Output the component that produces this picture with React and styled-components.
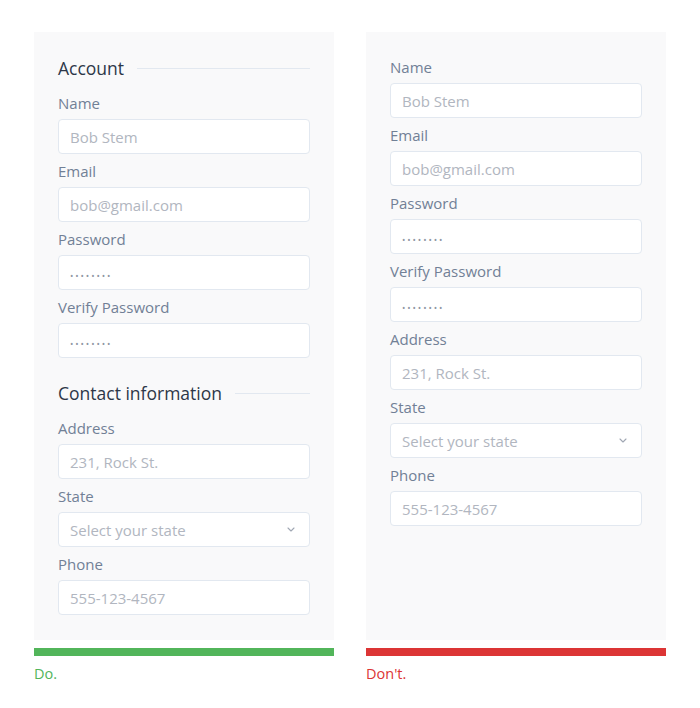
import React from 'react';
import styled, { createGlobalStyle } from 'styled-components';

const GlobalStyle = createGlobalStyle`
  * { box-sizing: border-box; }
  body {
    margin: 0;
    background: #ffffff;
    font-family: "Open Sans", "Noto Sans", sans-serif;
  }
`;

const Page = styled.div`
  display: flex;
  gap: 32px;
  padding: 32px 0 0 34px;
`;

const Column = styled.div`
  width: 300px;
  display: flex;
  flex-direction: column;
`;

const Panel = styled.div`
  height: 608px;
  background: #f9f9fa;
  padding: ${p => (p.flat ? '25px 24px 0' : '24px 24px 0')};
`;

const Section = styled.div`
  margin-top: ${p => (p.first ? '0' : '23px')};
`;

const Heading = styled.div`
  display: flex;
  align-items: center;
  gap: 13px;
  height: 24px;
  margin-bottom: 13px;
  font-size: 17.5px;
  font-weight: 500;
  color: #2d3748;
  white-space: nowrap;

  &::after {
    content: '';
    flex: 1;
    height: 1px;
    background: #e2e8f0;
  }
`;

const Field = styled.div`
  display: flex;
  flex-direction: column;
  margin-bottom: 7px;
`;

const Label = styled.label`
  font-size: 15px;
  line-height: 21px;
  font-weight: 500;
  color: #718096;
  margin-bottom: 5px;
`;

const Input = styled.input`
  width: 252px;
  height: 35px;
  border: 1px solid #e2e8f0;
  border-radius: 4px;
  background: #ffffff;
  padding: 0 11px;
  font-family: inherit;
  font-size: 15px;
  color: #2d3748;
  outline: none;

  &::placeholder {
    color: ${p => (p.dots ? '#8e95a2' : '#b1b6c0')};
    font-size: ${p => (p.dots ? '9px' : '15px')};
    letter-spacing: ${p => (p.dots ? '1.9px' : '0')};
  }
`;

const SelectBox = styled.div`
  width: 252px;
  height: 35px;
  border: 1px solid #e2e8f0;
  border-radius: 4px;
  background: #ffffff;
  padding: 0 14px 0 11px;
  display: flex;
  align-items: center;
  justify-content: space-between;
  font-size: 15px;
  color: #b1b6c0;
`;

const Bar = styled.div`
  height: 8px;
  margin-top: 8px;
  background: ${p => p.color};
`;

const Caption = styled.div`
  margin-top: 8px;
  font-size: 14.5px;
  line-height: 20px;
  font-weight: 500;
  color: ${p => p.color};
`;

const Chevron = () => (
  <svg width="8" height="5" viewBox="0 0 8 5" fill="none">
    <path d="M1 1l3 3 3-3" stroke="#a0a7b3" strokeWidth="1.1" strokeLinecap="round" strokeLinejoin="round" />
  </svg>
);

const account = [
  { label: 'Name', placeholder: 'Bob Stem' },
  { label: 'Email', placeholder: 'bob@gmail.com' },
  { label: 'Password', placeholder: '••••••••', dots: true },
  { label: 'Verify Password', placeholder: '••••••••', dots: true },
];

const contact = [
  { label: 'Address', placeholder: '231, Rock St.' },
  { label: 'State', select: 'Select your state' },
  { label: 'Phone', placeholder: '555-123-4567' },
];

const Fields = ({ items }) =>
  items.map(f => (
    <Field key={f.label}>
      <Label>{f.label}</Label>
      {f.select ? (
        <SelectBox>
          <span>{f.select}</span>
          <Chevron />
        </SelectBox>
      ) : (
        <Input type="text" placeholder={f.placeholder} dots={f.dots ? 1 : 0} readOnly />
      )}
    </Field>
  ));

const App = () => (
  <>
    <GlobalStyle />
    <Page>
      <Column>
        <Panel>
          <Section first>
            <Heading>Account</Heading>
            <Fields items={account} />
          </Section>
          <Section>
            <Heading>Contact information</Heading>
            <Fields items={contact} />
          </Section>
        </Panel>
        <Bar color="#52b55a" />
        <Caption color="#52b55a">Do.</Caption>
      </Column>
      <Column>
        <Panel flat>
          <Fields items={[...account, ...contact]} />
        </Panel>
        <Bar color="#dc3535" />
        <Caption color="#dc3535">Don't.</Caption>
      </Column>
    </Page>
  </>
);

export default App;
